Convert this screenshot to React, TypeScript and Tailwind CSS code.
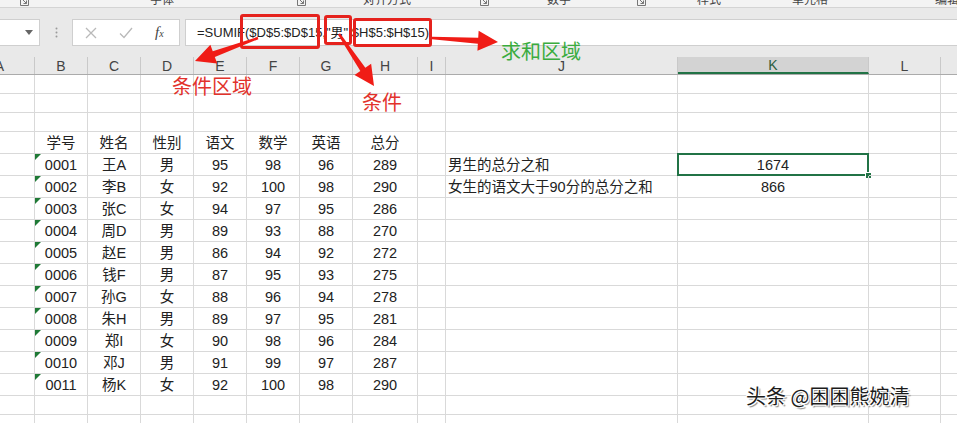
import React from 'react';

const colW = ['w-[70px]', 'w-[53px]', 'w-[53px]', 'w-[53px]', 'w-[53px]', 'w-[53px]', 'w-[53px]', 'w-[65px]', 'w-[28px]', 'w-[232px]', 'w-[191px]', 'w-[72px]', 'w-[90px]'];
const letters = ['A', 'B', 'C', 'D', 'E', 'F', 'G', 'H', 'I', 'J', 'K', 'L', 'M'];

const students = [
  ['0001', '王A', '男', '95', '98', '96', '289'],
  ['0002', '李B', '女', '92', '100', '98', '290'],
  ['0003', '张C', '女', '94', '97', '95', '286'],
  ['0004', '周D', '男', '89', '93', '88', '270'],
  ['0005', '赵E', '男', '86', '94', '92', '272'],
  ['0006', '钱F', '男', '87', '95', '93', '275'],
  ['0007', '孙G', '女', '88', '96', '94', '278'],
  ['0008', '朱H', '男', '89', '97', '95', '281'],
  ['0009', '郑I', '女', '90', '98', '96', '284'],
  ['0010', '邓J', '男', '91', '99', '97', '287'],
  ['0011', '杨K', '女', '92', '100', '98', '290'],
];

interface RowData {
  h: string;
  cells: string[];
  mark?: boolean;
}

const rows: RowData[] = [
  { h: 'h-[19px]', cells: [] },
  { h: 'h-[19px]', cells: [] },
  { h: 'h-[19px]', cells: [] },
  { h: 'h-[22px]', cells: ['', '学号', '姓名', '性别', '语文', '数学', '英语', '总分'] },
  ...students.map((s, i) => ({
    h: 'h-[22px]',
    mark: true,
    cells: [
      '',
      ...s,
      '',
      i === 0 ? '男生的总分之和' : i === 1 ? '女生的语文大于90分的总分之和' : '',
      i === 0 ? '1674' : i === 1 ? '866' : '',
    ],
  })),
  { h: 'h-[19px]', cells: [] },
  { h: 'h-[19px]', cells: [] },
];

// red arrow drawn as one polygon: tapered shaft plus head
const arrow = (x1: number, y1: number, x2: number, y2: number) => {
  const dx = x2 - x1;
  const dy = y2 - y1;
  const len = Math.hypot(dx, dy);
  const ux = dx / len;
  const uy = dy / len;
  const px = -uy;
  const py = ux;
  const headLen = 20;
  const headW = 10;
  const shaftW = 3;
  const bx = x2 - ux * headLen;
  const by = y2 - uy * headLen;
  const pts = [
    [x1 + px * 1.2, y1 + py * 1.2],
    [bx + px * shaftW, by + py * shaftW],
    [bx + px * headW, by + py * headW],
    [x2, y2],
    [bx - px * headW, by - py * headW],
    [bx - px * shaftW, by - py * shaftW],
    [x1 - px * 1.2, y1 - py * 1.2],
  ];
  return pts.map((p) => p.join(',')).join(' ');
};

const Launcher = () => (
  <svg width="9" height="9" viewBox="0 0 9 9" className="shrink-0">
    <path d="M0.5 0.5H8.5V8.5H0.5Z" fill="none" stroke="#777" />
    <path d="M2.5 2.5L6.5 6.5M6.5 3.5V6.5H3.5" fill="none" stroke="#777" />
  </svg>
);

export default function App() {
  return (
    <div className="relative w-[957px] h-[423px] overflow-hidden bg-white font-['Liberation_Sans','Noto_Sans_CJK_SC',sans-serif] text-[#222]">
      {/* ribbon bottom edge */}
      <div className="h-[8px] bg-[#f3f3f3] border-b border-[#d4d4d4] overflow-hidden flex items-end pb-[1px] text-[12px] leading-[12px] text-[#444] whitespace-nowrap">
        <span className="ml-[20px]"><Launcher /></span>
        <span className="ml-[121px]">字体</span>
        <span className="ml-[123px]"><Launcher /></span>
        <span className="ml-[57px]">对齐方式</span>
        <span className="ml-[69px]"><Launcher /></span>
        <span className="ml-[58px]">数字</span>
        <span className="ml-[66px]"><Launcher /></span>
        <span className="ml-[51px]">样式</span>
        <span className="ml-[54px] w-px h-[10px] bg-[#c8c8c8]" />
        <span className="ml-[17px]">单元格</span>
        <span className="ml-[31px] w-px h-[10px] bg-[#c8c8c8]" />
        <span className="ml-[76px]">编辑</span>
      </div>
      <div className="h-[11px] bg-[#e9e9e9]" />

      {/* formula bar */}
      <div className="h-[27px] flex bg-[#e9e9e9]">
        <div className="w-[40px] bg-white border-y border-r border-[#cfcfcf] flex items-center justify-end pr-[6px]">
          <svg width="8" height="5" viewBox="0 0 8 5">
            <path d="M0 0H8L4 5Z" fill="#666" />
          </svg>
        </div>
        <div className="w-[32px] flex items-center justify-center">
          <svg width="3" height="11" viewBox="0 0 3 11">
            <circle cx="1.5" cy="1.5" r="1" fill="#9a9a9a" />
            <circle cx="1.5" cy="5.5" r="1" fill="#9a9a9a" />
            <circle cx="1.5" cy="9.5" r="1" fill="#9a9a9a" />
          </svg>
        </div>
        <div className="w-[108px] bg-white border border-[#cfcfcf] flex items-center">
          <svg width="12" height="12" viewBox="0 0 12 12" className="ml-[12px]">
            <path d="M1 1L11 11M11 1L1 11" stroke="#b9b9b9" strokeWidth="1.3" />
          </svg>
          <svg width="14" height="12" viewBox="0 0 14 12" className="ml-[22px]">
            <path d="M1 6.5L5 10.5L13 1" fill="none" stroke="#b9b9b9" strokeWidth="1.3" />
          </svg>
          <span className="ml-[22px] font-['Liberation_Serif',serif] italic text-[15px] text-[#444] leading-none">
            f<span className="text-[10px]">x</span>
          </span>
        </div>
        <div className="w-[5px]" />
        <div className="flex-1 bg-white border-y border-l border-[#cfcfcf] flex items-center pl-[11px] text-[13px] text-[#222] whitespace-nowrap">
          =SUMIF($D$5:$D$15,"男",$H$5:$H$15)
        </div>
      </div>
      <div className="h-[11px] bg-[#e9e9e9]" />

      {/* sheet */}
      <div className="overflow-hidden">
        <div className="-ml-[35px]">
          <div className="flex h-[18px] bg-[#e9e9e9] border-b border-[#ababab] text-[14px] text-[#444]">
            {letters.map((l, i) => (
              <div
                key={l}
                className={`${colW[i]} shrink-0 flex items-center justify-center border-r border-[#c9c9c9] pt-[2px] ${
                  l === 'K' ? 'bg-[#d3d3d3] text-[#2d5e3e] border-b-2 border-b-[#217346]' : ''
                }`}
              >
                {l}
              </div>
            ))}
          </div>
          {rows.map((r, ri) => (
            <div key={ri} className={`flex ${r.h} text-[14.5px]`}>
              {colW.map((w, ci) => {
                const text = r.cells[ci] || '';
                const isJ = ci === 9;
                return (
                  <div
                    key={ci}
                    className={`${w} shrink-0 relative border-r border-b border-[#d9d9d9] flex items-center pt-[3px] whitespace-nowrap ${
                      isJ ? 'justify-start pl-[2px]' : 'justify-center'
                    }`}
                  >
                    {r.mark && ci === 1 && (
                      <span className="absolute top-0 left-0 w-0 h-0 border-t-[6px] border-t-[#1f7a36] border-r-[6px] border-r-transparent" />
                    )}
                    {ri === 4 && ci === 10 && (
                      <>
                        <span className="absolute -left-px -top-px -right-px -bottom-px border-2 border-[#217346]" />
                        <span className="absolute -right-[4px] -bottom-[4px] w-[7px] h-[7px] bg-[#217346] border border-white" />
                      </>
                    )}
                    {text}
                  </div>
                );
              })}
            </div>
          ))}
        </div>
      </div>

      {/* annotations */}
      <div className="absolute left-[240px] top-[14px] w-[80px] h-[35px] border-[3px] border-[#e5221d] rounded-[3px]" />
      <div className="absolute left-[324px] top-[15px] w-[28px] h-[30px] border-[3px] border-[#e5221d] rounded-[3px]" />
      <div className="absolute left-[353px] top-[18px] w-[79px] h-[29px] border-[3px] border-[#e5221d] rounded-[3px]" />
      <svg className="absolute left-0 top-0" width="957" height="423" viewBox="0 0 957 423">
        <polygon points={arrow(258, 38, 195, 61)} fill="#f01c16" />
        <polygon points={arrow(339, 34, 374, 86)} fill="#f01c16" />
        <polygon points={arrow(432, 38, 498, 42)} fill="#f01c16" />
      </svg>
      <div className="absolute left-[172px] top-[74px] text-[20px] leading-[24px] text-[#e2322b] font-['Noto_Sans_CJK_SC',sans-serif]">
        条件区域
      </div>
      <div className="absolute left-[362px] top-[90px] text-[20px] leading-[24px] text-[#e2322b] font-['Noto_Sans_CJK_SC',sans-serif]">
        条件
      </div>
      <div className="absolute left-[501px] top-[39px] text-[20px] leading-[24px] text-[#3aac3e] font-['Noto_Sans_CJK_SC',sans-serif]">
        求和区域
      </div>
      <div className="absolute left-[746px] top-[384px] text-[20px] leading-[24px] text-[#1c1c1c] font-['Noto_Sans_CJK_SC',sans-serif] [text-shadow:1px_1px_0_#fff,-1px_-1px_0_#fff,1px_-1px_0_#fff,-1px_1px_0_#fff,2px_2px_1px_#888]">
        头条 @困困熊婉清
      </div>
    </div>
  );
}
